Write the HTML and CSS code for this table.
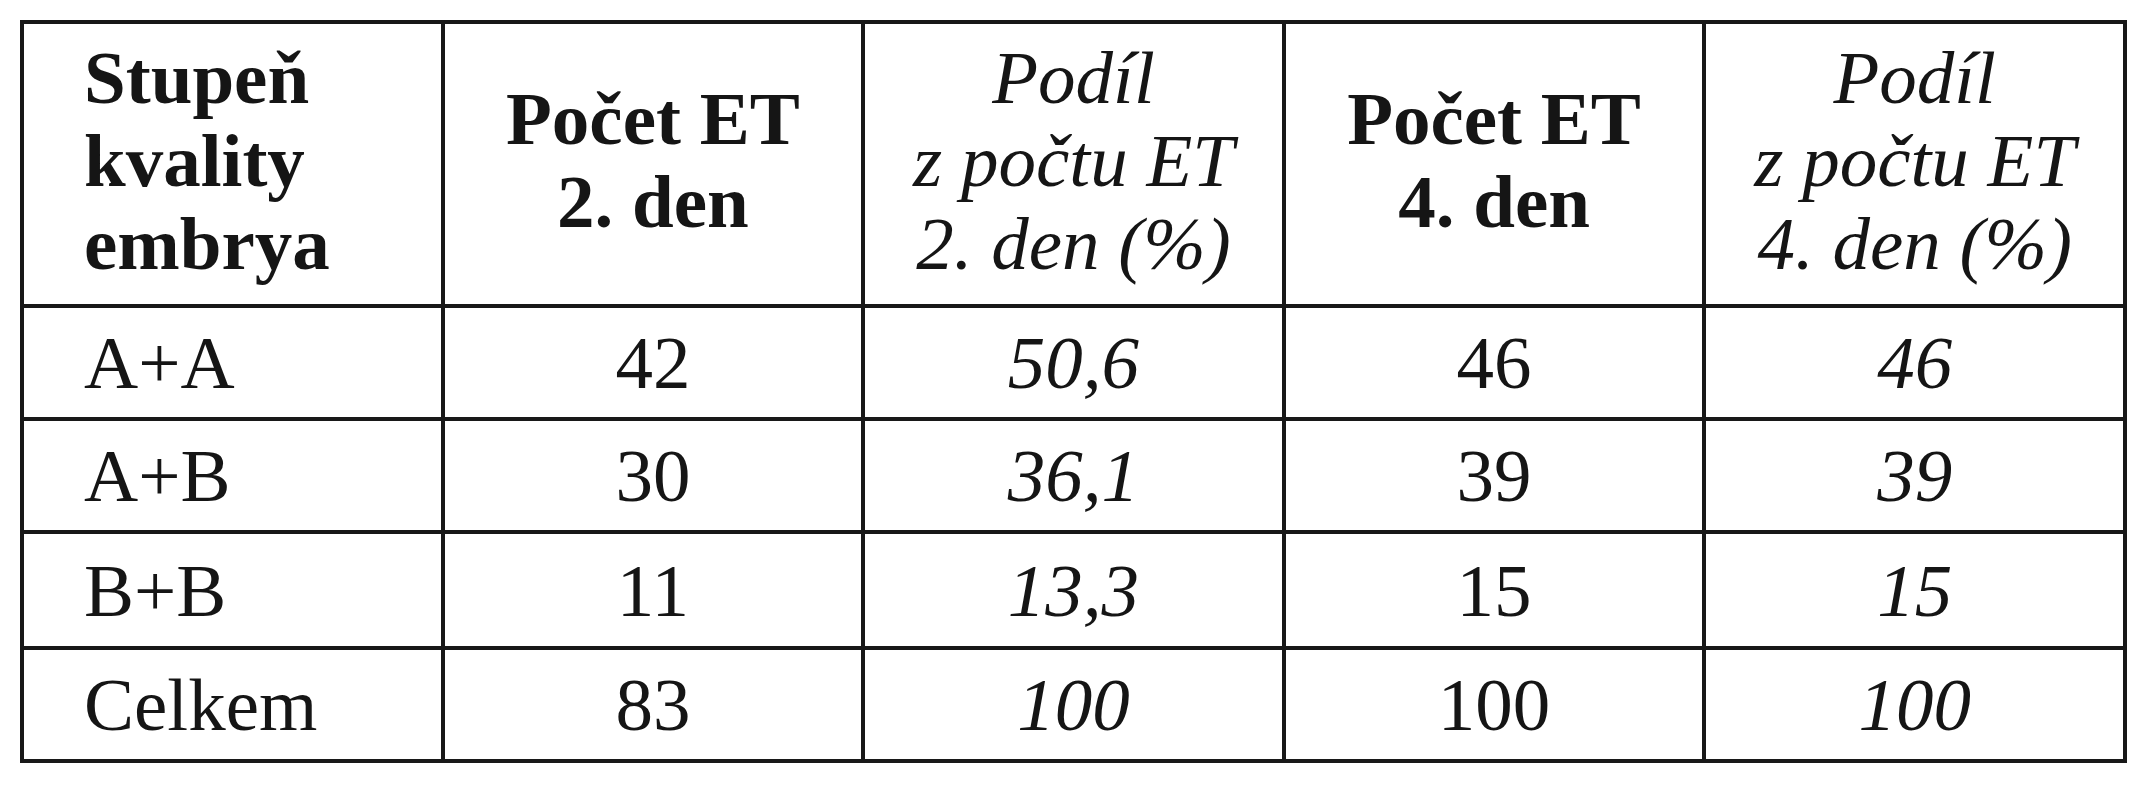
FILE: index.html
```html
<!DOCTYPE html>
<html lang="cs">
<head>
<meta charset="utf-8">
<title>Stupeň kvality embrya</title>
<link rel="stylesheet" href="styles.css">
</head>
<body>
<table class="grid">
  <colgroup>
    <col class="c"><col class="c"><col class="c"><col class="c"><col class="c">
  </colgroup>
  <thead>
    <tr class="head">
      <th class="label">Stupeň<br>kvality<br>embrya</th>
      <th>Počet ET<br>2. den</th>
      <th class="it">Podíl<br>z počtu ET<br>2. den (%)</th>
      <th>Počet ET<br>4. den</th>
      <th class="it">Podíl<br>z počtu ET<br>4. den (%)</th>
    </tr>
  </thead>
  <tbody>
    <tr><td class="label">A+A</td><td>42</td><td class="it">50,6</td><td>46</td><td class="it">46</td></tr>
    <tr><td class="label">A+B</td><td>30</td><td class="it">36,1</td><td>39</td><td class="it">39</td></tr>
    <tr class="tall"><td class="label">B+B</td><td>11</td><td class="it">13,3</td><td>15</td><td class="it">15</td></tr>
    <tr><td class="label">Celkem</td><td>83</td><td class="it">100</td><td>100</td><td class="it">100</td></tr>
  </tbody>
</table>
</body>
</html>
```

FILE: styles.css
```css
html, body {
  margin: 0;
  padding: 0;
  background: #ffffff;
}

body {
  padding: 20px 0 0 20px;
  font-family: "Liberation Serif", "Times New Roman", serif;
  color: #151515;
}

.grid {
  border-collapse: collapse;
  table-layout: fixed;
  width: 2107px;
  border: 4px solid #181818;
}

.grid .c {
  width: 20%;
}

.grid th,
.grid td {
  border: 4px solid #181818;
  text-align: center;
  vertical-align: middle;
  font-size: 75px;
  line-height: 83px;
  padding: 0 10px;
}

.grid th {
  font-weight: bold;
}

.grid th.it {
  font-weight: normal;
  font-style: italic;
}

.grid td {
  font-weight: normal;
}

.grid td.it {
  font-style: italic;
}

.grid .label {
  text-align: left;
  padding-left: 60px;
}

.grid .head th {
  padding-bottom: 8px;
}

.head {
  height: 284px;
}

.grid tbody tr {
  height: 113px;
}

.grid tbody tr.tall {
  height: 116px;
}
```
